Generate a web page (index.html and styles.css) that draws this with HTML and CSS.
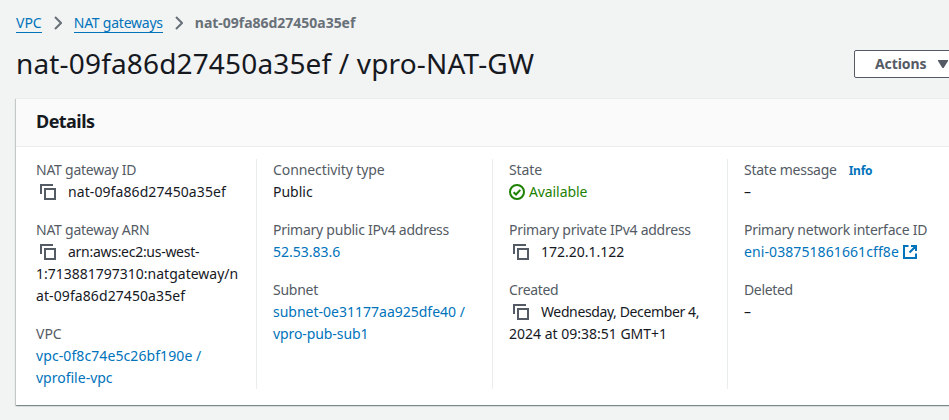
FILE: index.html
```html
<!DOCTYPE html>
<html lang="en">
<head>
<meta charset="utf-8">
<title>NAT gateway details</title>
<link rel="stylesheet" href="styles.css">
</head>
<body>
<svg width="0" height="0" class="defs">
  <symbol id="copy" viewBox="0 0 16 16"><path d="M1 10V1h12M5 5h10v10H5z"/></symbol>
  <symbol id="chevron" viewBox="0 0 8 14"><path d="M1 1l6 6-6 6"/></symbol>
</svg>
<nav class="crumbs">
  <a class="crumb" href="#">VPC</a>
  <svg class="chevron"><use href="#chevron"/></svg>
  <a class="crumb crumb-mid" href="#">NAT gateways</a>
  <svg class="chevron"><use href="#chevron"/></svg>
  <span class="current">nat-09fa86d27450a35ef</span>
</nav>
<header class="heading">
  <h1>nat-09fa86d27450a35ef / vpro-NAT-GW</h1>
  <button class="actions"><span>Actions</span><svg width="10" height="8" viewBox="0 0 10 8"><path d="M0 0h10v1L5.6 8H4.4L0 1z"/></svg></button>
</header>
<section class="card">
  <h2>Details</h2>
  <div class="columns">
    <dl>
      <dt>NAT gateway ID</dt>
      <dd class="id"><svg class="copy"><use href="#copy"/></svg>nat-09fa86d27450a35ef</dd>
      <dt>NAT gateway ARN</dt>
      <dd><svg class="copy"><use href="#copy"/></svg><span class="arn">arn:aws:ec2:us-west-</span><br>1:713881797310:natgateway/n<br><span class="id">at-09fa86d27450a35ef</span></dd>
      <dt class="plain">VPC</dt>
      <dd><a class="id" href="#">vpc-0f8c74e5c26bf190e /</a><br><a href="#">vprofile-vpc</a></dd>
    </dl>
    <dl>
      <dt class="slight">Connectivity type</dt>
      <dd>Public</dd>
      <dt>Primary public IPv4 address</dt>
      <dd><a href="#">52.53.83.6</a></dd>
      <dt>Subnet</dt>
      <dd><a href="#">subnet-0e31177aa925dfe40 /<br><span class="slight">vpro-pub-sub1</span></a></dd>
    </dl>
    <dl>
      <dt class="slight">State</dt>
      <dd class="status"><svg class="check" viewBox="0 0 16 16"><circle cx="8" cy="8" r="7"/><path d="M4.6 8.2l2.4 2.3 4.3-4.6"/></svg>Available</dd>
      <dt>Primary private IPv4 address</dt>
      <dd><svg class="copy"><use href="#copy"/></svg>172.20.1.122</dd>
      <dt class="created">Created</dt>
      <dd><svg class="copy"><use href="#copy"/></svg><span class="date">Wednesday, December 4,</span><br>2024 at 09:38:51 GMT+1</dd>
    </dl>
    <dl>
      <dt>State message<a class="info" href="#">Info</a></dt>
      <dd>–</dd>
      <dt>Primary network interface ID</dt>
      <dd><a class="id" href="#">eni-038751861661cff8e<svg class="external" viewBox="0 0 14 14"><path d="M5.5 1H1v12h12V8.5M8 1h5v5M13 1L6.5 7.5"/></svg></a></dd>
      <dt class="created">Deleted</dt>
      <dd>–</dd>
    </dl>
  </div>
</section>
</body>
</html>
```
FILE: styles.css
```css
* { box-sizing: border-box; }
body {
  margin: 0;
  height: 420px;
  overflow: hidden;
  background: #f2f3f3;
  color: #16191f;
  font: 14px/22px "Noto Sans", "Open Sans", sans-serif;
}
.defs { display: none; }
a { color: #0073bb; text-decoration: none; }
svg { fill: none; stroke: #545b64; stroke-width: 2; }
.crumbs {
  display: flex;
  align-items: center;
  padding: 12px 16px 0;
  height: 34px;
}
.crumb {
  height: 21px;
  line-height: 22px;
  margin-top: -1px;
  border-bottom: 1px solid #0073bb;
}
.crumb-mid { letter-spacing: -0.23px; }
.chevron { width: 8px; height: 14px; margin: 0 12px; stroke: #687078; }
.current { color: #687078; font-weight: 700; letter-spacing: -0.02px; }
.heading {
  display: flex;
  align-items: flex-start;
  justify-content: space-between;
  height: 64px;
  width: 965px;
  padding: 11px 0 0 16px;
}
h1 {
  margin: 0;
  font-size: 28px;
  line-height: 36px;
  font-weight: 400;
  letter-spacing: 0.16px;
}
.actions {
  display: flex;
  align-items: center;
  justify-content: space-between;
  width: 111px;
  height: 28px;
  margin-top: 5px;
  padding: 0 16px 0 20px;
  border: 1px solid #545b64;
  border-radius: 2px;
  background: #fff;
  color: #545b64;
  font: 700 14px/22px "Noto Sans", sans-serif;
  letter-spacing: -0.1px;
}
.actions svg { fill: #545b64; stroke: none; }
.card {
  width: 965px;
  height: 307px;
  margin-left: 16px;
  background: #fff;
  border-top: 1px solid #eaeded;
  box-shadow: 0 1px 1px 0 rgba(0,28,36,.3), 1px 1px 1px 0 rgba(0,28,36,.15), -1px 1px 1px 0 rgba(0,28,36,.15);
}
h2 {
  margin: 0;
  height: 48px;
  padding: 11px 20px;
  background: #fafafa;
  border-bottom: 1px solid #eaeded;
  font-size: 18px;
  line-height: 22px;
  font-weight: 700;
  letter-spacing: -0.55px;
}
.columns {
  display: grid;
  grid-template-columns: 220px 236px 235px 240px;
  grid-template-rows: 230px;
  margin: 12px 0 0 20px;
}
dl { margin: 0; white-space: nowrap; }
dl + dl { border-left: 1px solid #eaeded; padding-left: 16px; }
dt { height: 22px; color: #545b64; letter-spacing: -0.25px; }
dd { margin: 0 0 16px; }
.plain { letter-spacing: 0; }
.slight { letter-spacing: -0.09px; }
.id { letter-spacing: 0.09px; }
.arn { letter-spacing: -0.28px; }
.date { letter-spacing: -0.38px; }
.created { letter-spacing: -0.35px; }
.copy { width: 16px; height: 16px; margin: 0 12px 0 4px; vertical-align: -3px; }
.status { color: #1d8102; letter-spacing: -0.1px; }
.check { width: 16px; height: 16px; margin-right: 4px; vertical-align: -3px; stroke: #1d8102; }
.info { margin-left: 12px; font-size: 12px; line-height: 1; font-weight: 700; }
.external { width: 14px; height: 14px; margin-left: 4px; vertical-align: -2px; stroke: #0073bb; }
```
